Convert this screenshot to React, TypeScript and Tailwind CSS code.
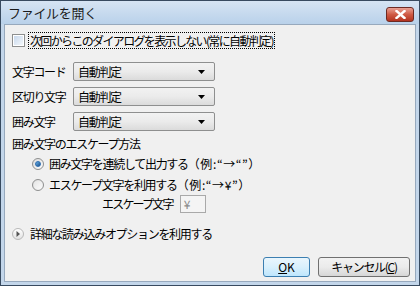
import React from "react";

const font = { fontFamily: '"Noto Sans CJK JP", "Noto Sans", sans-serif' };

function Select() {
  return (
    <div className="flex h-[19px] w-[142px] items-center justify-between rounded-[2px] border border-[#8e8f8f] bg-gradient-to-b from-[#f2f2f2] via-[#ebebeb] to-[#dbdbdb] pl-[4px] pr-[9px]">
      <span className="leading-none">自動判定</span>
      <svg width="7" height="4" viewBox="0 0 7 4">
        <path d="M0 0H7L3.5 4Z" fill="#000" />
      </svg>
    </div>
  );
}

function Radio({ checked }: { checked?: boolean }) {
  return (
    <div className="flex h-[12px] w-[12px] items-center justify-center rounded-full border border-[#8e8f8f] bg-gradient-to-br from-[#dcdcdc] to-[#fbfbfb]">
      {checked ? (
        <div className="h-[6px] w-[6px] rounded-full border border-[#2b6cb0] bg-gradient-to-br from-[#6ab3ec] to-[#1c4f86]" />
      ) : (
        <div className="h-[8px] w-[8px] rounded-full bg-gradient-to-br from-[#e6e6e6] to-[#fafafa]" />
      )}
    </div>
  );
}

export default function App() {
  return (
    <div
      className="flex h-[286px] w-[420px] flex-col overflow-hidden border border-[#384a5f] bg-[#c3d6ea] text-[12px] tracking-[-1.3px] text-black"
      style={font}
    >
      {/* Title bar */}
      <div className="flex h-[23px] shrink-0 items-center justify-between bg-gradient-to-b from-[#d6e4f3] to-[#b9d1ea] pl-[7px] pr-[5px]">
        <span className="pt-[1px] text-[13px] tracking-[-0.3px] text-[#1a1a1a]">ファイルを開く</span>
        <div className="mt-[3px] flex h-[15px] w-[28px] items-center justify-center rounded-[3px] border border-[#6d2a22] bg-gradient-to-b from-[#e8a093] via-[#cf5a44] to-[#b3321e]">
          <svg width="11" height="9" viewBox="0 0 11 9">
            <path d="M1.5 1L9.5 8M9.5 1L1.5 8" stroke="#fff" strokeWidth="2.4" strokeLinecap="square" />
          </svg>
        </div>
      </div>

      {/* Client area */}
      <div className="mx-[3px] mb-[3px] flex flex-1 flex-col border border-[#97a9bd] bg-[#f0f0f0] pl-[7px] pr-[4px]">
        {/* checkbox row */}
        <div className="mt-[7px] flex items-center">
          <div className="flex h-[13px] w-[13px] items-center justify-center border border-[#8e8f8f] bg-white">
            <div className="h-[9px] w-[9px] bg-gradient-to-br from-[#c8d8ec] to-[#f4f8fc]" />
          </div>
          <span className="ml-[3px] border border-dotted border-black px-[1px] py-[1px] leading-[13px] tracking-[-1.65px]">
            次回からこのダイアログを表示しない(常に自動判定)
          </span>
        </div>

        {/* selects */}
        <div className="mt-[13px] flex flex-col gap-[6px]">
          <div className="flex items-center">
            <span className="w-[61px]">文字コード</span>
            <Select />
          </div>
          <div className="flex items-center">
            <span className="w-[61px]">区切り文字</span>
            <Select />
          </div>
          <div className="flex items-center">
            <span className="w-[61px]">囲み文字</span>
            <Select />
          </div>
        </div>

        <div className="mt-[4px] leading-[18px]">囲み文字のエスケープ方法</div>

        <div className="ml-[20px] mt-[2px] flex flex-col gap-[3px]">
          <div className="flex h-[18px] items-center gap-[5px]">
            <Radio checked />
            <span>
              囲み文字を連続して出力する<span className="tracking-[0.6px]">（例:“→“”）</span>
            </span>
          </div>
          <div className="flex h-[18px] items-center gap-[5px]">
            <Radio />
            <span>
              エスケープ文字を利用する<span className="tracking-[0.6px]">（例:“→¥”）</span>
            </span>
          </div>
        </div>

        <div className="ml-[90px] mt-[1px] flex items-center gap-[7px]">
          <span className="tracking-[-1.8px]">エスケープ文字</span>
          <div className="flex h-[18px] w-[26px] items-center border border-[#a9a9a9] bg-[#f4f4f4] pl-[3px] text-[#8a8a8a]">
            ¥
          </div>
        </div>

        <div className="mt-[12px] flex items-center gap-[6px]">
          <div className="flex h-[12px] w-[12px] items-center justify-center rounded-full border border-[#b8b8b8] bg-gradient-to-b from-[#ffffff] to-[#e2e2e2]">
            <svg width="4" height="6" viewBox="0 0 4 6">
              <path d="M0.5 0L4 3L0.5 6Z" fill="#555" />
            </svg>
          </div>
          <span>詳細な読み込みオプションを利用する</span>
        </div>

        <div className="mt-auto mb-[4px] flex justify-end gap-[8px] pr-[1px]">
          <button className="flex h-[20px] w-[47px] items-center justify-center rounded-[3px] border border-[#3c7fb1] bg-gradient-to-b from-[#eaf6fd] via-[#d9f0fc] to-[#bee6fd] tracking-normal">
            <span>
              <span className="underline">O</span>K
            </span>
          </button>
          <button className="flex h-[20px] w-[92px] items-center justify-center rounded-[3px] border border-[#707070] bg-gradient-to-b from-[#f2f2f2] via-[#ebebeb] to-[#d6d6d6]">
            <span>
              キャンセル(<span className="underline">C</span>)
            </span>
          </button>
        </div>
      </div>
    </div>
  );
}
